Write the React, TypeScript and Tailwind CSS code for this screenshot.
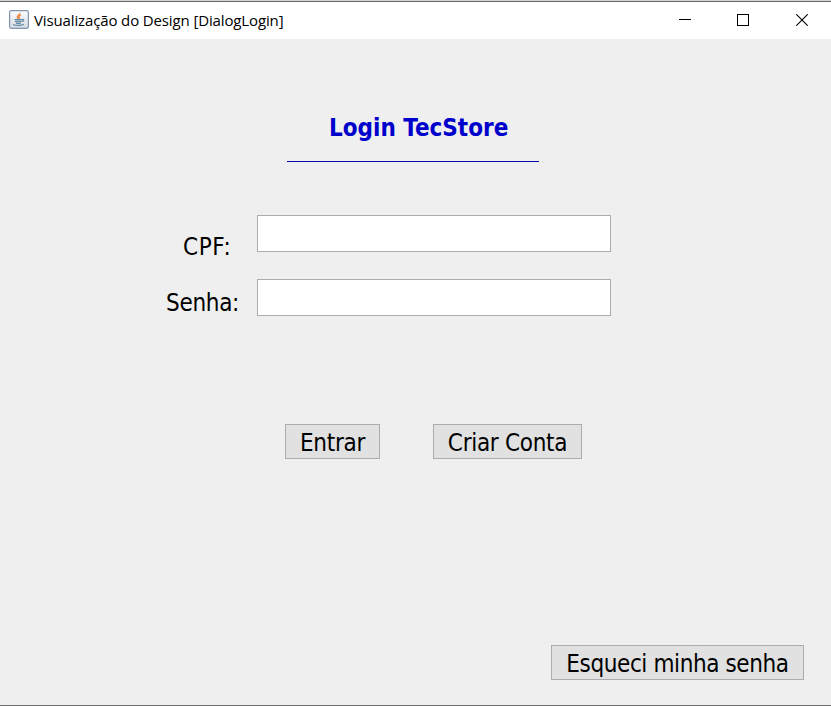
import type { ReactNode } from 'react';

const tahoma = "font-['DejaVu_Sans_Condensed','DejaVu_Sans',sans-serif] [font-stretch:condensed]";

function JavaIcon() {
  return (
    <svg width="20" height="19" viewBox="0 0 20 19" fill="none" className="-mt-px block">
      <defs>
        <linearGradient id="frame" x1="0" y1="0" x2="0" y2="1">
          <stop offset="0" stopColor="#fdfdfd" />
          <stop offset="1" stopColor="#d3dbe3" />
        </linearGradient>
      </defs>
      <rect x="0.6" y="0.6" width="18.8" height="17.8" rx="1.8" fill="url(#frame)" stroke="#8095ab" strokeWidth="1.2" />
      <path d="M10.600 3c1 1.700-2.900 2.600-2.300 4.200.2.800 1 1.200 1.200 1.800M11.800 5c-1.800.8-2.400 1.600-1.500 2.600.4.5.2.9-.3 1.400" stroke="#ea8a4e" strokeWidth="1.500" />
      <path d="M5.500 9.700h7.500M6 11.500h6.500M7 13.300h4.800" stroke="#668ba6" strokeWidth="1.300" />
      <path d="M13 9.600c2.400-.8 2.300 1.500-.2 2.100M4 14.400c2.600 1.500 8.500 1.300 10.800-.2" stroke="#668ba6" strokeWidth="1.200" />
    </svg>
  );
}

function Button({ className, children }: { className: string; children: ReactNode }) {
  return (
    <button className={`flex h-[35px] shrink-0 justify-center whitespace-nowrap border border-[#adadad] bg-[#e1e1e1] pt-0.5 text-2xl leading-[33px] ${className}`}>
      {children}
    </button>
  );
}

export default function App() {
  return (
    <div className={`flex h-[706px] w-[831px] flex-col overflow-hidden border-b border-[#6e6e6e] bg-[#efefef] text-black ${tahoma}`}>
      <div className="h-px shrink-0 bg-[#d2d4d0]" />
      <header className="flex h-[38px] shrink-0 items-center border-t border-[#6a6a6a] bg-white pb-px pl-[9px]">
        <JavaIcon />
        <span className="ml-[5px] whitespace-nowrap font-['Open_Sans','Noto_Sans',sans-serif] text-[15px] tracking-[-0.13px] [font-stretch:normal]">
          Visualização do Design [DialogLogin]
        </span>
        <div className="ml-auto flex items-center pr-[23px]">
          <svg width="12" height="12" shapeRendering="crispEdges"><path d="M0 5.500h12" stroke="#000" /></svg>
          <svg className="ml-[46px]" width="12" height="12" fill="none" shapeRendering="crispEdges"><rect x=".5" y=".5" width="11" height="11" stroke="#000" /></svg>
          <svg className="ml-[47px]" width="12" height="12"><path d="M.3.300l11.400 11.400M11.700.300L.300 11.700" stroke="#000" strokeWidth="1.100" /></svg>
        </div>
      </header>
      <main className="flex flex-1 flex-col">
        <h1 className="ml-[329px] mt-[74px] h-[30px] whitespace-nowrap text-2xl font-bold leading-[30px] text-[#0000cc]">
          Login TecStore
        </h1>
        <div className="ml-[287px] mt-[18px] h-px w-[252px] bg-[#0000aa]" />
        <div className="mt-[53px] flex h-[64px]">
          <label className="ml-[183px] mt-[17px] w-[74px] whitespace-nowrap text-2xl leading-[30px] tracking-[0.6px]">CPF:</label>
          <input className="h-[37px] w-[354px] border border-[#abadb3] bg-white" />
        </div>
        <div className="flex h-[145px]">
          <label className="ml-[166px] mt-[9px] w-[91px] whitespace-nowrap text-2xl leading-[30px] tracking-[-0.3px]">Senha:</label>
          <input type="password" className="h-[37px] w-[354px] border border-[#abadb3] bg-white" />
        </div>
        <div className="ml-[285px] flex gap-[53px]">
          <Button className="w-[95px] tracking-[-0.3px]">Entrar</Button>
          <Button className="w-[149px] tracking-[-0.3px]">Criar Conta</Button>
        </div>
        <div className="mt-auto flex justify-end pb-[25px] pr-[27px]">
          <Button className="w-[253px] tracking-[-0.4px]">Esqueci minha senha</Button>
        </div>
      </main>
    </div>
  );
}
